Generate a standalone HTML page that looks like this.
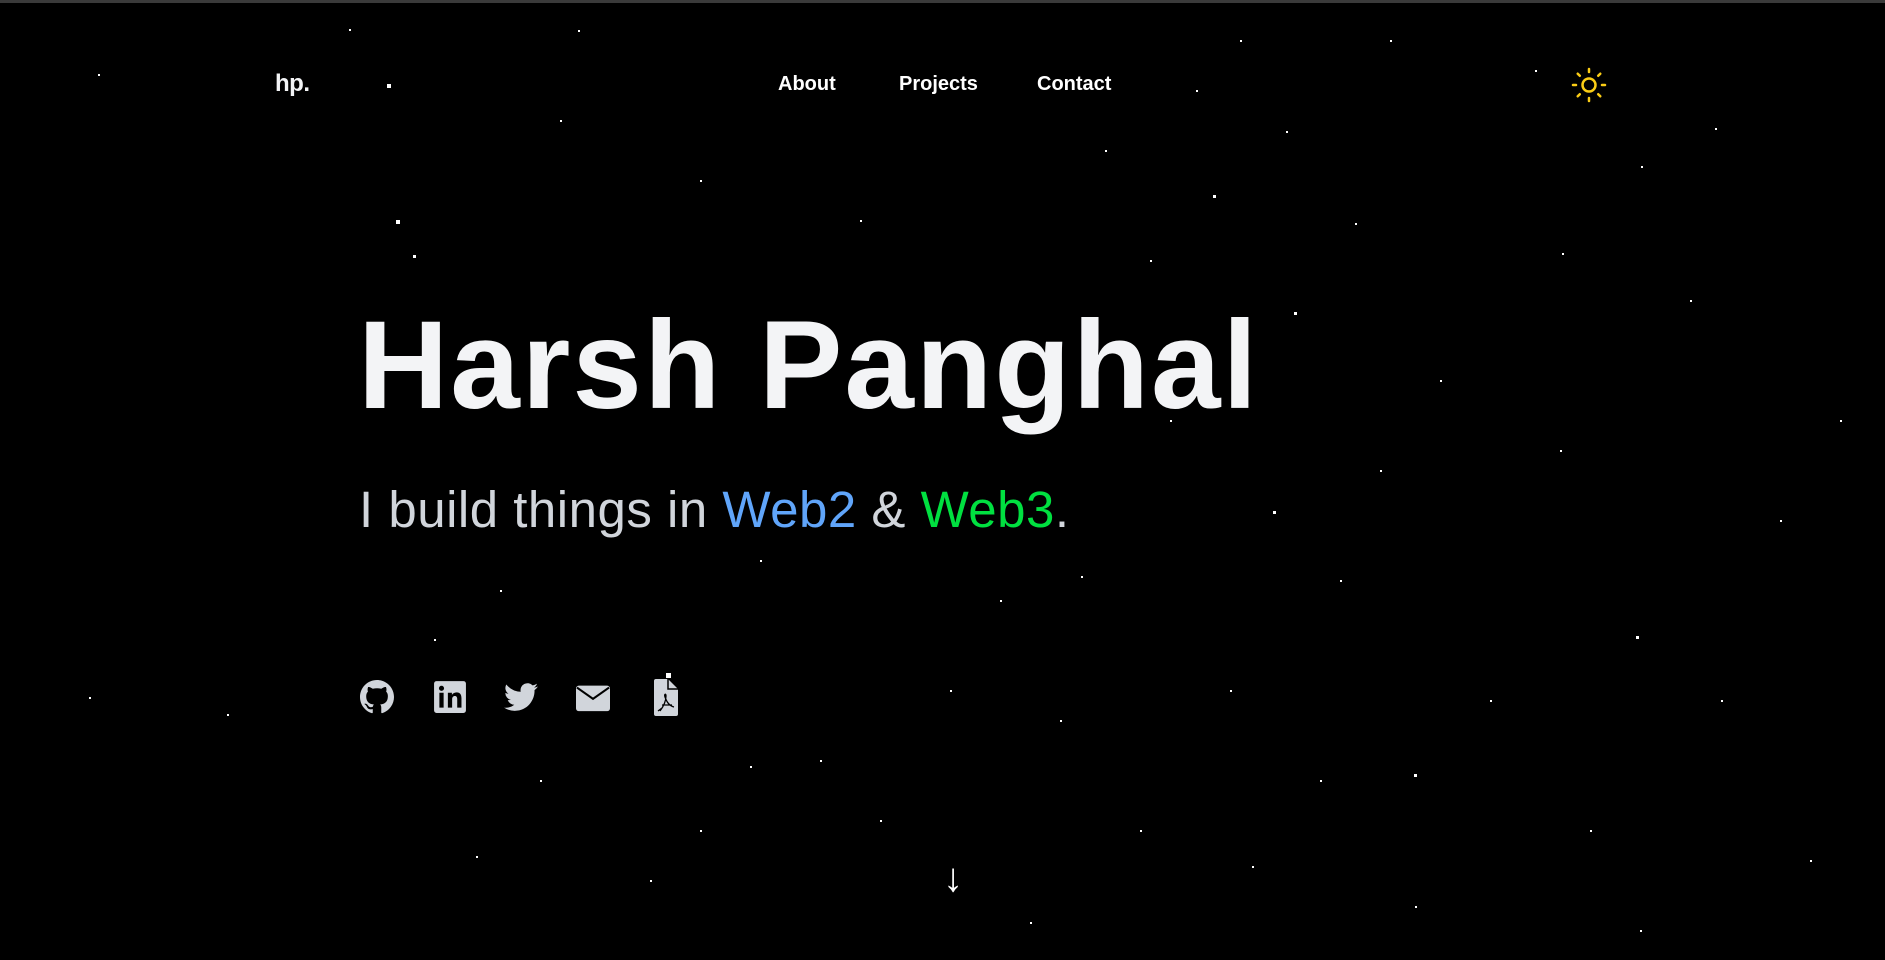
<!DOCTYPE html>
<html><head><meta charset="utf-8"><style>
html,body{margin:0;padding:0;background:#000;width:1885px;height:960px;overflow:hidden;font-family:"Liberation Sans",sans-serif}
.top{position:absolute;left:0;top:0;width:1885px;height:3px;background:#3a3a3a}
.logo{position:absolute;left:275px;top:70px;color:#f3f4f6;font-weight:bold;font-size:24px;letter-spacing:-0.5px}
.nav{position:absolute;top:73px;color:#fff;font-weight:bold;font-size:20px}
.title{position:absolute;left:358px;top:303px;color:#f3f4f6;font-weight:bold;font-size:125px;letter-spacing:2px;line-height:1;white-space:nowrap}
.sub{position:absolute;left:359px;top:484px;color:#d1d5db;font-size:51px;letter-spacing:0.5px;white-space:nowrap;line-height:1}
.b{color:#60a5fa}.g{color:#00e040}
.ic{position:absolute;top:680px;width:34px;height:34px}
.s{position:absolute;background:#fff;width:2px;height:2px}
.arrow{position:absolute;left:943px;top:858px;color:#fff;font-size:40px;line-height:1}
</style></head><body>
<div class="top"></div>
<div class="s" style="left:387px;top:84px;width:4px;height:4px"></div>
<div class="s" style="left:396px;top:220px;width:4px;height:4px"></div>
<div class="s" style="left:413px;top:255px;width:3px;height:3px"></div>
<div class="s" style="left:1213px;top:195px;width:3px;height:3px"></div>
<div class="s" style="left:1273px;top:511px;width:3px;height:3px"></div>
<div class="s" style="left:1636px;top:636px;width:3px;height:3px"></div>
<div class="s" style="left:1294px;top:312px;width:3px;height:3px"></div>
<div class="s" style="left:1641px;top:166px"></div>
<div class="s" style="left:1562px;top:253px"></div>
<div class="s" style="left:1081px;top:576px"></div>
<div class="s" style="left:1414px;top:774px;width:3px;height:3px"></div>
<div class="s" style="left:89px;top:697px"></div>
<div class="s" style="left:227px;top:714px"></div>
<div class="s" style="left:1721px;top:700px"></div>
<div class="s" style="left:750px;top:766px"></div>
<div class="s" style="left:434px;top:639px"></div>
<div class="s" style="left:98px;top:74px"></div>
<div class="s" style="left:578px;top:30px"></div>
<div class="s" style="left:349px;top:29px"></div>
<div class="s" style="left:1196px;top:90px"></div>
<div class="s" style="left:1286px;top:131px"></div>
<div class="s" style="left:1355px;top:223px"></div>
<div class="s" style="left:1535px;top:70px"></div>
<div class="s" style="left:1715px;top:128px"></div>
<div class="s" style="left:1390px;top:40px"></div>
<div class="s" style="left:1150px;top:260px"></div>
<div class="s" style="left:1440px;top:380px"></div>
<div class="s" style="left:1560px;top:450px"></div>
<div class="s" style="left:1340px;top:580px"></div>
<div class="s" style="left:1230px;top:690px"></div>
<div class="s" style="left:1060px;top:720px"></div>
<div class="s" style="left:880px;top:820px"></div>
<div class="s" style="left:650px;top:880px"></div>
<div class="s" style="left:476px;top:856px"></div>
<div class="s" style="left:1030px;top:922px"></div>
<div class="s" style="left:1252px;top:866px"></div>
<div class="s" style="left:1415px;top:906px"></div>
<div class="s" style="left:1590px;top:830px"></div>
<div class="s" style="left:1780px;top:520px"></div>
<div class="s" style="left:1690px;top:300px"></div>
<div class="s" style="left:1000px;top:600px"></div>
<div class="s" style="left:950px;top:690px"></div>
<div class="s" style="left:760px;top:560px"></div>
<div class="s" style="left:500px;top:590px"></div>
<div class="s" style="left:560px;top:120px"></div>
<div class="s" style="left:700px;top:180px"></div>
<div class="s" style="left:860px;top:220px"></div>
<div class="s" style="left:1105px;top:150px"></div>
<div class="s" style="left:1170px;top:420px"></div>
<div class="s" style="left:1380px;top:470px"></div>
<div class="s" style="left:1320px;top:780px"></div>
<div class="s" style="left:1490px;top:700px"></div>
<div class="s" style="left:820px;top:760px"></div>
<div class="s" style="left:700px;top:830px"></div>
<div class="s" style="left:540px;top:780px"></div>
<div class="s" style="left:1140px;top:830px"></div>
<div class="s" style="left:1640px;top:930px"></div>
<div class="s" style="left:1810px;top:860px"></div>
<div class="s" style="left:1840px;top:420px"></div>
<div class="s" style="left:1240px;top:40px"></div>

<div class="logo">hp.</div>
<div class="nav" style="left:778px">About</div>
<div class="nav" style="left:899px">Projects</div>
<div class="nav" style="left:1037px">Contact</div>
<svg style="position:absolute;left:1571px;top:67px" width="36" height="36" viewBox="0 0 36 36" fill="none" stroke="#facc15" stroke-width="2.5" stroke-linecap="round">
<circle cx="18" cy="18" r="6.5"/>
<path d="M18 2v3M18 31v3M2 18h3M31 18h3M6.7 6.7l2.1 2.1M27.2 27.2l2.1 2.1M6.7 29.3l2.1-2.1M27.2 8.8l2.1-2.1"/>
</svg>

<div class="title">Harsh Panghal</div>
<div class="sub">I build things in <span class="b">Web2</span> &amp; <span class="g">Web3</span>.</div>

<svg class="ic" style="left:360px" viewBox="0 0 16 16" fill="#d1d5db"><path d="M8 0C3.58 0 0 3.58 0 8c0 3.54 2.29 6.53 5.47 7.59.4.07.55-.17.55-.38 0-.19-.01-.82-.01-1.49-2.01.37-2.53-.49-2.69-.94-.09-.23-.48-.94-.82-1.13-.28-.15-.68-.52-.01-.53.63-.01 1.08.58 1.23.82.72 1.21 1.87.87 2.33.66.07-.52.28-.87.51-1.07-1.78-.2-3.64-.89-3.64-3.95 0-.87.31-1.59.82-2.15-.08-.2-.36-1.02.08-2.12 0 0 .67-.21 2.2.82.64-.18 1.32-.27 2-.27.68 0 1.36.09 2 .27 1.53-1.04 2.2-.82 2.2-.82.44 1.1.16 1.92.08 2.12.51.56.82 1.27.82 2.15 0 3.07-1.87 3.75-3.65 3.95.29.25.54.73.54 1.48 0 1.07-.01 1.93-.01 2.2 0 .21.15.46.55.38A8 8 0 0016 8c0-4.42-3.58-8-8-8z"/></svg>
<svg class="ic" style="left:433px" viewBox="0 0 16 16"><rect x="0.5" y="0.5" width="15" height="15" rx="1.2" fill="#d1d5db"/><g fill="#000"><rect x="3" y="6" width="2" height="7"/><circle cx="4" cy="3.9" r="1.2"/><path d="M7 6h1.9v1c.4-.7 1.2-1.2 2.2-1.2 1.6 0 2.3 1 2.3 2.8V13h-2V9c0-.9-.3-1.5-1.1-1.5-.8 0-1.3.6-1.3 1.5v4H7z"/></g></svg>
<svg class="ic" style="left:504px" viewBox="0 0 24 24" fill="#d1d5db"><path d="M23.95 4.57a10 10 0 01-2.82.77 4.96 4.96 0 002.16-2.72c-.95.56-2 .96-3.12 1.19a4.92 4.92 0 00-8.38 4.48A13.94 13.94 0 011.64 3.16a4.92 4.92 0 001.52 6.57 4.9 4.9 0 01-2.23-.61v.06a4.92 4.92 0 003.95 4.83 4.96 4.96 0 01-2.22.08 4.93 4.93 0 004.6 3.42A9.87 9.87 0 010 19.54a13.9 13.9 0 007.55 2.21c9.05 0 14-7.5 14-13.98 0-.21 0-.42-.02-.63A9.94 9.94 0 0024 4.59z"/></svg>
<svg class="ic" style="left:576px" viewBox="0 0 36 36"><rect x="0" y="6" width="36" height="27" rx="3" fill="#d1d5db"/><path d="M1 8l17 12L35 8" fill="none" stroke="#000" stroke-width="2.2"/></svg>
<svg style="position:absolute;left:652px;top:673px" width="28" height="44" viewBox="0 0 28 44"><path d="M2 6h14l10 10v25a2 2 0 01-2 2H4a2 2 0 01-2-2V8a2 2 0 012-2z" fill="#d1d5db"/><rect x="14" y="0" width="5" height="5" fill="#fff"/><path d="M16 6v10h10" fill="none" stroke="#000" stroke-width="1.5"/><path d="M8 38c3-4 6-10 6-15 0-3-2-2-1 1 2 6 5 9 9 10M6 38l4-3M10 32h10" fill="none" stroke="#000" stroke-width="1.3"/></svg>

<div class="arrow">↓</div>
</body></html>
